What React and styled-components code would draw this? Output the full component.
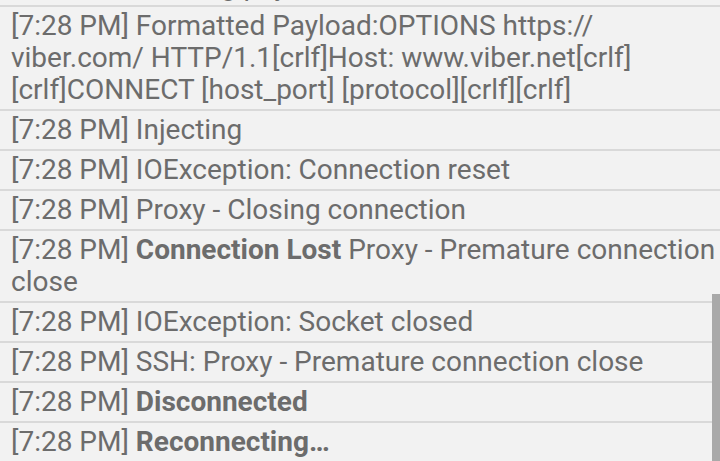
import React from "react";
import styled, { createGlobalStyle } from "styled-components";

const Global = createGlobalStyle`
  html, body { margin: 0; padding: 0; background: #f2f2f2; }
  body { font-family: Roboto, "Noto Sans", sans-serif; }
`;

const Viewport = styled.div`
  position: relative;
  width: 720px;
  height: 461px;
  overflow: hidden;
  background: #f2f2f2;
`;

const List = styled.div`
  display: flex;
  flex-direction: column;
  margin-top: -33px;
`;

const Row = styled.div`
  padding: 3px 0 3px 11px;
  border-bottom: 2px solid #d9d9d9;
  font-size: 28px;
  line-height: 32px;
  color: #6c6c6c;
`;

const Strong = styled.b`
  font-weight: 700;
`;

const Scrollbar = styled.div`
  position: absolute;
  right: 0;
  top: 294px;
  width: 8px;
  bottom: 0;
  background: #a9a9a9;
`;

const rows = [
  ["Sending payload"],
  ["Formatted Payload:OPTIONS https://", <wbr key="w" />, "viber.com/ HTTP/1.1[crlf]Host: www.viber.net[crlf][crlf]CONNECT [host_port] [protocol][crlf][crlf]"],
  ["Injecting"],
  ["IOException: Connection reset"],
  ["Proxy - Closing connection"],
  [<Strong key="b">Connection Lost</Strong>, " Proxy - Premature connection close"],
  ["IOException: Socket closed"],
  ["SSH: Proxy - Premature connection close"],
  [<Strong key="b">Disconnected</Strong>],
  [<Strong key="b">Reconnecting…</Strong>],
];

export default function App() {
  return (
    <>
      <Global />
      <Viewport>
        <List>
          {rows.map((parts, i) => (
            <Row key={i}>
              [7:28 PM] {parts}
            </Row>
          ))}
        </List>
        <Scrollbar />
      </Viewport>
    </>
  );
}
